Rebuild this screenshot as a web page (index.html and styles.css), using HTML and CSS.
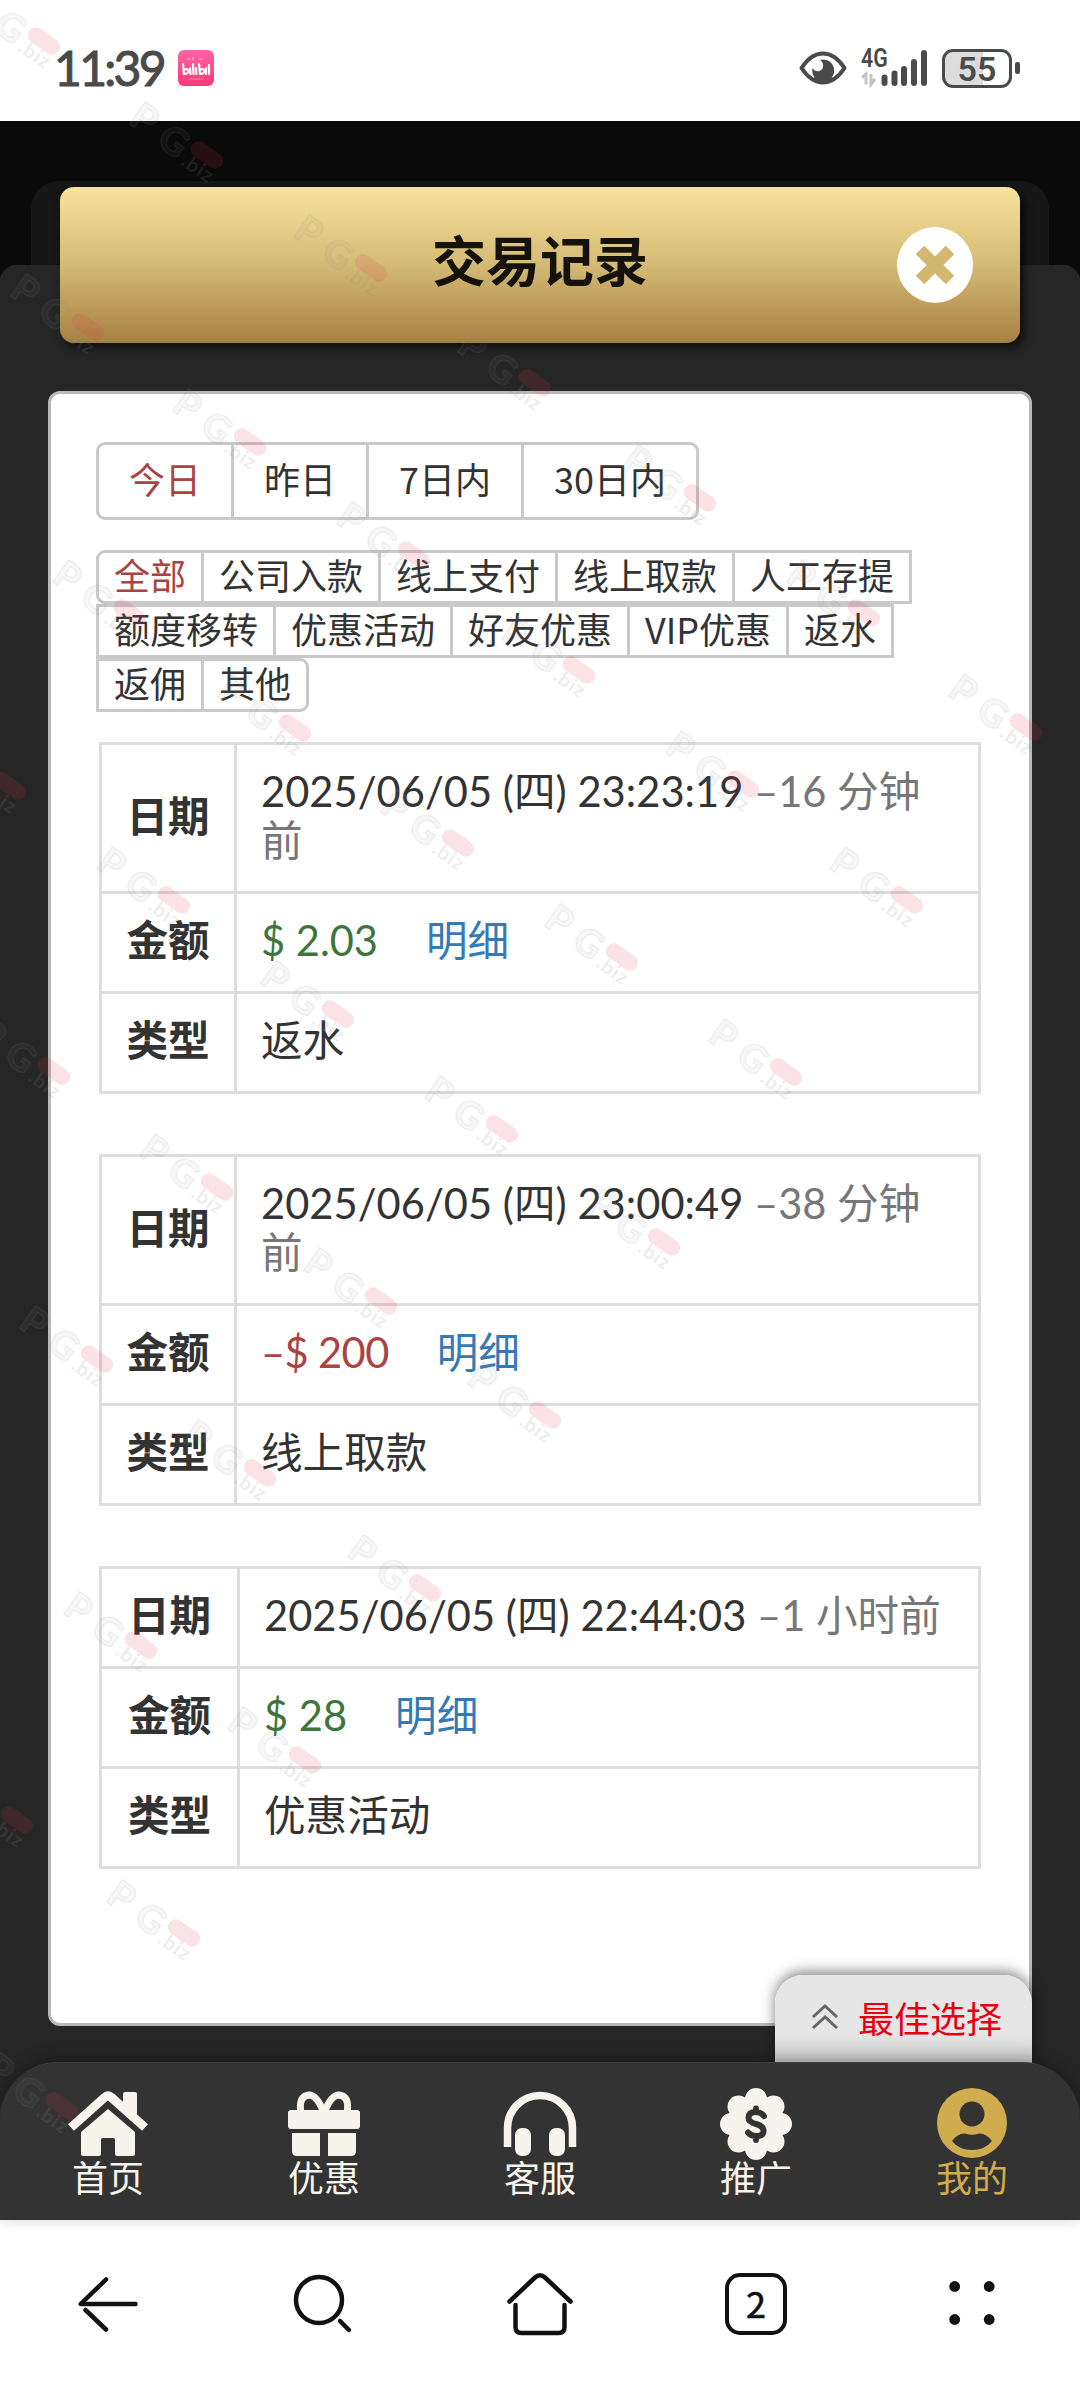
FILE: index.html
```html
<!DOCTYPE html>
<html lang="zh-CN">
<head>
<meta charset="utf-8">
<title>交易记录</title>
<link rel="stylesheet" href="styles.css">
</head>
<body>
<header class="status">
  <span class="clock">11:39</span>
  <svg class="app-icon" width="36" height="36" viewBox="0 0 36 36">
    <defs><linearGradient id="pink" x1="0" y1="0" x2="0" y2="1"><stop offset="0" stop-color="#ff64a6"/><stop offset="1" stop-color="#fb3a76"/></linearGradient></defs>
    <rect width="36" height="36" rx="6" fill="url(#pink)"/>
    <g fill="none" stroke="#fff" stroke-width="2.2" stroke-linecap="round">
      <path d="M5 14l1 10q5 0 4-4q-1-2-4 0M12 18l.5 6M15 14l.5 10M18 18l.3 6M21 14l1 10q5 0 4-4q-1-2-4 0M28 18v6M31 15v9"/>
      <path d="M9 9h3M15 7v3M21 9h4" stroke-width="1.2" opacity=".45"/>
      <path d="M11 29h14" stroke-width="1" opacity=".35"/>
    </g>
  </svg>
  <svg class="eye" width="48" height="34" viewBox="0 0 48 34">
    <path d="M2.5 17Q12 2.5 24 2.5T45.500 17Q36 31.500 24 31.500T2.500 17Z" fill="none" stroke="#4a4a4a" stroke-width="4" stroke-linejoin="round"/>
    <path d="M21 9A11 11 0 1 1 13.500 17Q16 21 20.500 20Q25 18 24 13Q23 10 21 9Z" fill="#4a4a4a"/>
    <path d="M14 27Q24 36 34 27L24 22Z" fill="#4a4a4a"/>
  </svg>
  <div class="signal">
    <span class="net">4G</span>
    <svg width="70" height="40" viewBox="0 0 70 40">
      <path d="M1 29.500L5 26V36.500M10 26V36.500L14 31" fill="none" stroke="#c4c4c4" stroke-width="3"/>
      <g stroke="#4a4a4a" stroke-width="6" stroke-linecap="round"><path d="M23.500 29.500V35M33.500 25.500V35M43 21V35M53 14V35M63 5V35"/></g>
    </svg>
  </div>
  <div class="battery"><span>55</span></div>
  <i class="nub"></i>
</header>

<main class="page">
  <div class="back-card"></div>
  <div class="back-sheet"></div>
  <div class="title-bar">
    <h1>交易记录</h1>
    <svg class="close" width="76" height="76" viewBox="0 0 76 76">
      <circle cx="38" cy="38" r="38" fill="#fff"/>
      <path d="M23 23L53 53M53 23L23 53" stroke="#d2b871" stroke-width="12" stroke-linejoin="round"/>
    </svg>
  </div>

  <section class="card">
    <div class="days"><a class="on">今日</a><a>昨日</a><a>7日内</a><a>30日内</a></div>
    <div class="kinds">
      <div><a class="on first">全部</a><a>公司入款</a><a>线上支付</a><a>线上取款</a><a>人工存提</a></div>
      <div><a>额度移转</a><a>优惠活动</a><a>好友优惠</a><a>VIP优惠</a><a>返水</a></div>
      <div><a>返佣</a><a class="last">其他</a></div>
    </div>

    <table class="record">
      <tr class="tall"><th>日期</th><td><span class="when">2025/06/05 (四) 23:23:19</span> <span class="ago">–16 分钟<br>前</span></td></tr>
      <tr><th>金额</th><td><span class="plus">$ 2.03</span><a class="detail">明细</a></td></tr>
      <tr><th>类型</th><td>返水</td></tr>
    </table>
    <table class="record">
      <tr class="tall"><th>日期</th><td><span class="when">2025/06/05 (四) 23:00:49</span> <span class="ago">–38 分钟<br>前</span></td></tr>
      <tr><th>金额</th><td><span class="minus">–$ 200</span><a class="detail">明细</a></td></tr>
      <tr><th>类型</th><td>线上取款</td></tr>
    </table>
    <table class="record wide">
      <tr><th>日期</th><td><span class="when">2025/06/05 (四) 22:44:03</span> <span class="ago">–1 小时前</span></td></tr>
      <tr><th>金额</th><td><span class="plus">$ 28</span><a class="detail">明细</a></td></tr>
      <tr><th>类型</th><td>优惠活动</td></tr>
    </table>
  </section>

  <div class="best">
    <svg width="28" height="28" viewBox="0 0 28 28"><path d="M2 14L14 3L26 14M2 25L14 14L26 25" fill="none" stroke="#666" stroke-width="3"/></svg>
    <span>最佳选择</span>
  </div>

  <nav class="nav">
    <a><svg width="84" height="74" viewBox="0 0 84 74" fill="#f6f4ed">
      <path d="M59 6h10q2 0 2 2v22L57 18V8q0-2 2-2Z"/>
      <path d="M5 41.500L38.500 11.500Q42 8.500 45.500 11.500L79 41.500" fill="none" stroke="#f6f4ed" stroke-width="9"/>
      <path d="M42 23L69 46v22q0 2-2 2H51q-2 0-2-2V54q0-2-2-2H37q-2 0-2 2v14q0 2-2 2H17q-2 0-2-2V46Z"/>
    </svg>首页</a>
    <a><svg width="84" height="74" viewBox="0 0 84 74" fill="#f6f4ed">
      <path d="M42 27Q35 9 27 9Q16 10 19 27M42 27Q49 9 57 9Q68 10 65 27" fill="none" stroke="#f6f4ed" stroke-width="7"/>
      <rect x="6" y="24" width="72" height="19" rx="3"/>
      <path d="M10 47h28v23H15q-5 0-5-5ZM46 47h28v18q0 5-5 5H46Z"/>
    </svg>优惠</a>
    <a><svg width="84" height="74" viewBox="0 0 84 74" fill="#f6f4ed">
      <path d="M9.500 61V42A32.500 32.500 0 0 1 74.500 42V61" fill="none" stroke="#f6f4ed" stroke-width="7.500"/>
      <rect x="17" y="42" width="16" height="28" rx="7"/><rect x="51" y="42" width="16" height="28" rx="7"/>
    </svg>客服</a>
    <a><svg width="84" height="74" viewBox="0 0 84 74" fill="#f6f4ed">
      <circle cx="42" cy="38" r="28"/>
      <circle cx="42" cy="13" r="11"/><circle cx="42" cy="63" r="11"/><circle cx="17" cy="38" r="11"/><circle cx="67" cy="38" r="11"/>
      <circle cx="24.500" cy="20.500" r="11"/><circle cx="59.500" cy="20.500" r="11"/><circle cx="24.500" cy="55.500" r="11"/><circle cx="59.500" cy="55.500" r="11"/>
      <path d="M50 30Q47 26 42 26Q34.500 26 34.500 32Q34.500 36 42 38Q49.500 40 49.500 45Q49.500 50 42 50Q37 50 34 46.500M42 22.500V26M42 50v4" fill="none" stroke="#333" stroke-width="6" stroke-linecap="round"/>
    </svg>推广</a>
    <a class="on"><svg width="84" height="74" viewBox="0 0 84 74">
      <circle cx="42" cy="37" r="35" fill="#d0ac4e"/><circle cx="42" cy="28" r="12.500" fill="#333"/>
      <path d="M22 55Q28 47 35 47.500Q42 50 49 47.500Q56 47 62 55Q55 64 42 64T22 55Z" fill="#333"/>
    </svg>我的</a>
  </nav>
</main>

<footer class="browser">
  <svg viewBox="0 0 72 72"><path d="M34 11.500L8.700 36H63.500M13.500 42L34 61.500"/></svg>
  <svg viewBox="0 0 72 72"><circle cx="31" cy="32" r="23"/><path d="M52 53l9 9"/></svg>
  <svg viewBox="0 0 72 72"><path d="M5.500 33.500L31 9.500Q36 5 41 9.500L66.500 33.500M11.500 37V59q0 6 6 6H54.500q6 0 6-6V37"/></svg>
  <div class="tabs"><span>2</span></div>
  <svg viewBox="0 0 72 72"><g fill="#111" stroke="none"><circle cx="18.700" cy="18.500" r="5.400"/><circle cx="53.200" cy="18.500" r="5.400"/><circle cx="18.700" cy="51.500" r="5.400"/><circle cx="53.200" cy="51.500" r="5.400"/></g></svg>
</footer>

<svg class="marks" width="1080" height="2388" viewBox="0 0 1080 2388">
  <defs>
    <g id="mark"><g transform="rotate(35)">
      <text class="mark-big" x="-84" y="19">P</text><text class="mark-big" x="-49" y="21">G</text>
      <rect class="mark-pill" x="-18" y="-8" width="36" height="16" rx="8"/>
      <text class="mark-small" x="-17" y="23">.biz</text>
    </g></g>
  </defs>
  <use href="#mark" x="44" y="41"/><use href="#mark" x="207" y="155"/><use href="#mark" x="371" y="268"/><use href="#mark" x="535" y="383"/><use href="#mark" x="700" y="498"/><use href="#mark" x="864" y="613"/><use href="#mark" x="1026" y="727"/>
  <use href="#mark" x="88" y="327"/><use href="#mark" x="250" y="442"/><use href="#mark" x="414" y="555"/><use href="#mark" x="579" y="670"/><use href="#mark" x="743" y="784"/><use href="#mark" x="907" y="900"/>
  <use href="#mark" x="130" y="613"/><use href="#mark" x="295" y="728"/><use href="#mark" x="458" y="843"/><use href="#mark" x="622" y="957"/><use href="#mark" x="786" y="1072"/>
  <use href="#mark" x="10" y="786"/><use href="#mark" x="174" y="900"/><use href="#mark" x="338" y="1014"/><use href="#mark" x="502" y="1129"/><use href="#mark" x="664" y="1242"/>
  <use href="#mark" x="54" y="1071"/><use href="#mark" x="217" y="1187"/><use href="#mark" x="381" y="1301"/><use href="#mark" x="545" y="1415"/>
  <use href="#mark" x="97" y="1359"/><use href="#mark" x="260" y="1473"/><use href="#mark" x="425" y="1588"/>
  <use href="#mark" x="141" y="1645"/><use href="#mark" x="305" y="1760"/>
  <use href="#mark" x="17" y="1820"/><use href="#mark" x="184" y="1933"/>
  <use href="#mark" x="62" y="2106"/>
</svg>
</body>
</html>
```
FILE: styles.css
```css
* { box-sizing: border-box; }
body {
  margin: 0;
  width: 1080px;
  height: 2388px;
  position: relative;
  overflow: hidden;
  display: flex;
  flex-direction: column;
  background: #fff;
  color: #333;
  font-family: "Noto Sans CJK SC", sans-serif;
}

/* phone status bar */
.status {
  height: 121px;
  padding: 15px 60px 0 54px;
  display: flex;
  align-items: center;
  color: #4a4a4a;
}
.clock { width: 124px; font: 400 48px/48px Lato, sans-serif; letter-spacing: -2.7px; -webkit-text-stroke: 1.1px #4a4a4a; }
.eye { margin-left: auto; }
.signal { position: relative; width: 70px; height: 40px; margin: 0 11px 0 14px; }
.signal svg { display: block; }
.net { position: absolute; left: 0; top: -2px; font: 600 25px/25px "Roboto", sans-serif; transform: scaleX(.85); transform-origin: left; }
.battery {
  width: 70px;
  height: 39px;
  border: 3px solid #4a4a4a;
  border-radius: 11px;
  background: linear-gradient(90deg, #dcdcdc 0 59%, #fff 59%);
  text-align: center;
  font: 600 34px/34px "Roboto", sans-serif;
}
.nub { width: 5px; height: 12px; margin-left: 3px; border-radius: 2px; background: #4a4a4a; }

/* page area */
.page {
  position: relative;
  height: 2099px;
  display: flex;
  flex-direction: column;
  background: #0a0a0a;
}
.back-card { position: absolute; left: 31px; right: 31px; top: 60px; height: 200px; border-radius: 28px; background: #171717; }
.back-sheet { position: absolute; left: 0; right: 0; top: 144px; bottom: 0; border-radius: 16px; background: #262626; }

.title-bar {
  position: relative;
  height: 156px;
  margin: 66px 60px 0;
  padding: 0 47px;
  display: flex;
  align-items: center;
  justify-content: flex-end;
  border-radius: 14px;
  background: linear-gradient(#f9e49c, #d3ba75 50%, #ab8545 96%, #9c8044);
  box-shadow: 4px 4px 10px rgba(0, 0, 0, .7);
}
.title-bar h1 { flex: 1; margin: 0 0 13px 76px; text-align: center; font-size: 54px; line-height: 80px; font-weight: 700; color: #15120b; }

.card {
  position: relative;
  height: 1635px;
  margin: 48px 48px 0;
  padding: 48px 45px 0 45px;
  border: 3px solid #b9b9b9;
  border-radius: 12px;
  background: #fff;
}
.days, .kinds div { display: flex; font-size: 36px; }
.days a, .kinds a { border: 3px solid #c9c9c9; white-space: nowrap; }
.days a + a, .kinds a + a { margin-left: -3px; }
.days a { height: 78px; padding: 0 30px; line-height: 66px; }
.days a:first-child { border-radius: 9px 0 0 9px; }
.days a:last-child { border-radius: 0 9px 9px 0; }
.kinds { margin-top: 30px; }
.kinds a { height: 54px; padding: 0 15px; line-height: 43px; }
.kinds .first { border-radius: 9px 0 0 9px; }
.kinds .last { border-radius: 0 9px 9px 0; }
.days .on, .kinds .on { color: #a94442; }

.record {
  width: 882px;
  margin: 30px 0 60px 3px;
  border-collapse: collapse;
  table-layout: fixed;
  font-size: 41.6px;
  line-height: 49px;
}
.record + .record { margin-top: 0; }
.record th, .record td { height: 100px; padding: 0; border: 3px solid #ddd; }
.record th { width: 135px; padding-bottom: 8px; text-align: center; }
.record.wide th { width: 138px; }
.record td { padding: 0 0 4px 24px; text-align: left; white-space: nowrap; font-family: Lato, "Noto Sans CJK SC", sans-serif; }
.record .tall th, .record .tall td { height: 149px; }
.when { letter-spacing: .05px; }
.ago { color: #777; }
.plus { color: #3c763d; }
.minus { color: #a94442; letter-spacing: -.6px; }
.detail { margin-left: 48px; color: #337ab7; }

.best {
  position: absolute;
  right: 48px;
  top: 1854px;
  width: 257px;
  height: 88px;
  padding: 0 30px 5px 0;
  display: flex;
  align-items: center;
  justify-content: flex-end;
  gap: 19px;
  border-radius: 28px 28px 0 0;
  background: linear-gradient(#e6e6e6 65%, #cfcfcf);
  box-shadow: 0 -3px 14px rgba(0, 0, 0, .5);
  color: #e60012;
  font-size: 36px;
}

.nav {
  position: relative;
  height: 158px;
  margin-top: 36px;
  padding-top: 23px;
  display: grid;
  grid-template-columns: repeat(5, 1fr);
  border-top: 1px solid #3d3d3d;
  border-radius: 58px 58px 0 0;
  background: #333;
  box-shadow: 0 -4px 16px rgba(0, 0, 0, .3);
}
.nav a {
  display: flex;
  flex-direction: column;
  align-items: center;
  color: #f6f4ed;
  font-size: 36px;
  line-height: 32px;
}
.nav .on { color: #d0ac4e; }

.browser {
  height: 168px;
  display: grid;
  grid-template-columns: repeat(5, 1fr);
  align-items: center;
  justify-items: center;
  background: #fff;
}
.browser svg { width: 72px; height: 72px; fill: none; stroke: #111; stroke-width: 4.5; stroke-linecap: round; stroke-linejoin: round; }
.tabs {
  width: 62px;
  height: 62px;
  border: 4px solid #111;
  border-radius: 15px;
  text-align: center;
  font: 400 36px/51px "Noto Sans CJK SC", sans-serif;
  color: #111;
  -webkit-text-stroke: .6px #111;
}

/* repeating site mark laid over the whole screen */
.marks { position: absolute; left: 0; top: 0; pointer-events: none; }
.mark-big { font: 900 38px Lato, sans-serif; fill: rgba(140, 140, 140, .07); stroke: rgba(140, 140, 140, .12); stroke-width: 1.5px; }
.mark-small { font: 700 20px Lato, sans-serif; fill: rgba(140, 140, 140, .17); letter-spacing: 1px; }
.mark-pill { fill: rgba(226, 50, 76, .14); }
```
